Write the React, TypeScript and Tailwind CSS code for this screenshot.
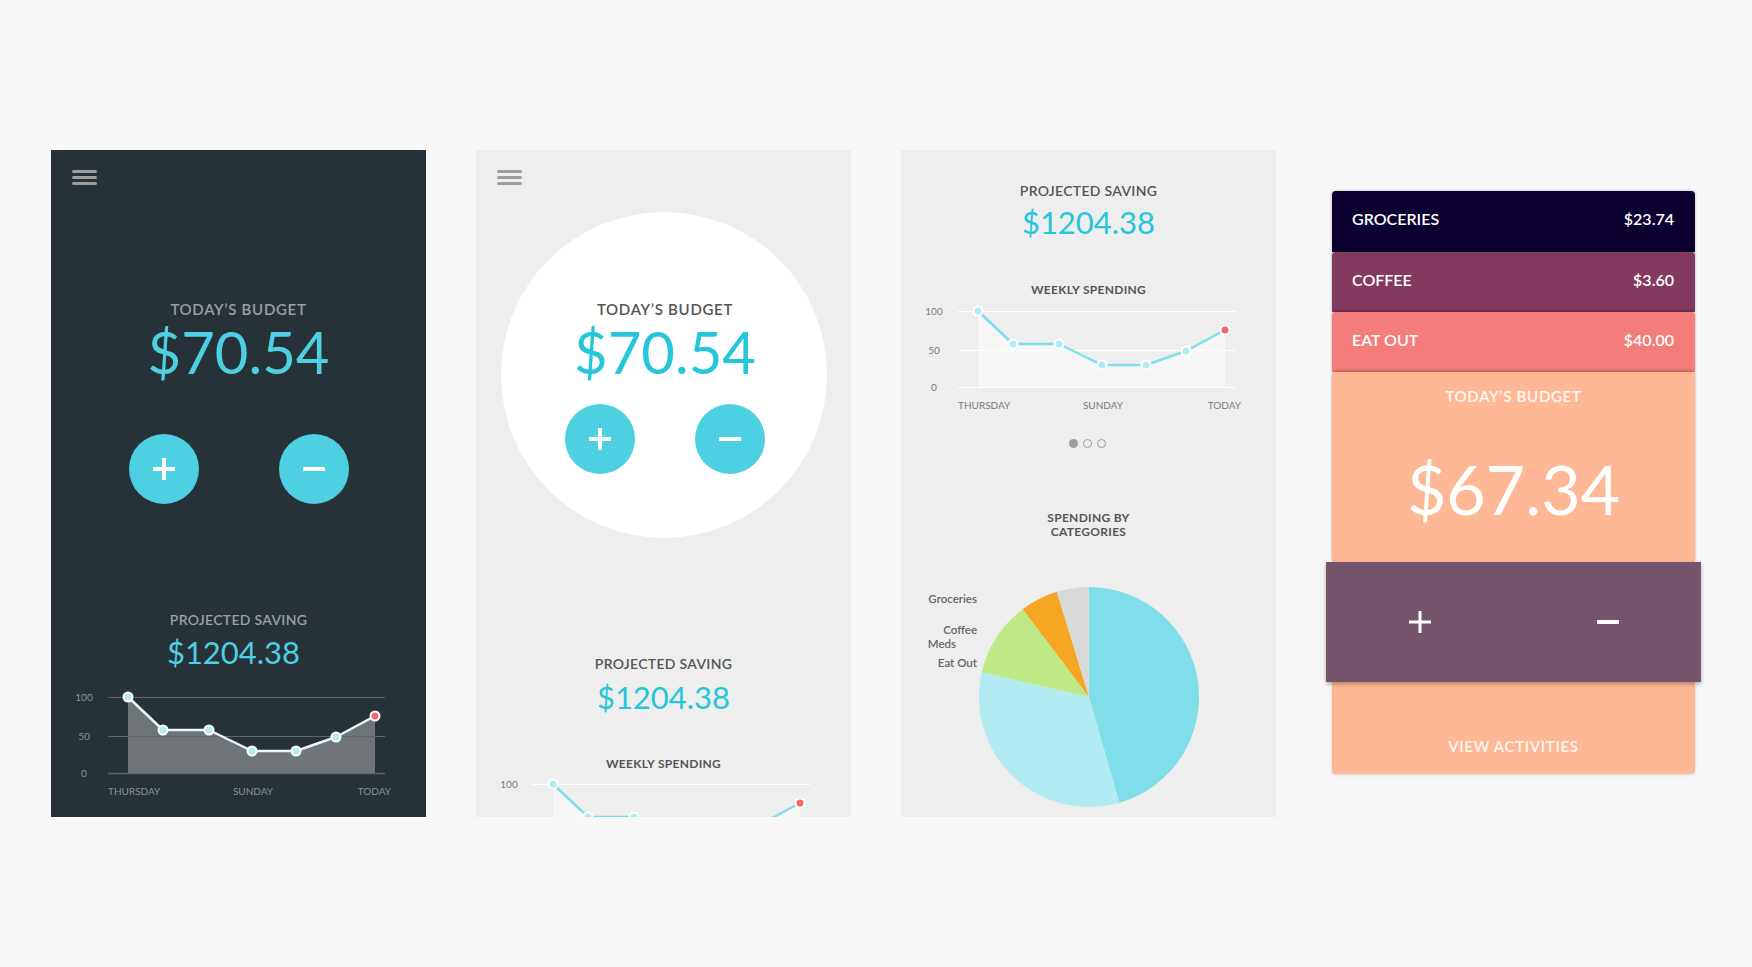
const xs = [77, 112, 158, 201, 245, 285, 324];
const ys = [0, 33, 33, 54, 54, 40, 19];

function Hamburger() {
  return (
    <div className="ml-[21px] mt-[20px] flex h-[15px] w-[25px] flex-col justify-between">
      <div className="h-[3px] rounded-full bg-[#9e9e9e]" />
      <div className="h-[3px] rounded-full bg-[#9e9e9e]" />
      <div className="h-[3px] rounded-full bg-[#9e9e9e]" />
    </div>
  );
}

function RoundButton({ minus }: { minus?: boolean }) {
  return (
    <div className="flex h-[70px] w-[70px] items-center justify-center rounded-full bg-[#4dd0e1]">
      <svg width="24" height="24" viewBox="0 0 24 24">
        <rect x="1" y="10" width="22" height="4" fill="#fff" />
        {!minus && <rect x="10" y="1" width="4" height="22" fill="#fff" />}
      </svg>
    </div>
  );
}

function WeeklyChart({ dark, height, top }: { dark: boolean; height: number; top: number }) {
  const grid = dark ? "#5d6569" : "#ffffff";
  const fill = dark ? "#6e7477" : "#f7f7f7";
  const stroke = dark ? "#eaf6f8" : "#80deea";
  const label = dark ? "#8d9498" : "#7a7a7a";
  const pts = xs.map((x, i) => `${x},${top + ys[i]}`).join(" ");
  const area = `${xs[0]},${top + 76} ${pts} ${xs[6]},${top + 76}`;
  const full = height > top + 100;
  return (
    <svg width={375} height={height} className="block shrink-0" style={{ fontFamily: "Lato, sans-serif" }}>
      <polygon points={area} fill={fill} />
      {[0, 39, 76].map((d) => (
        <line key={d} x1={57} x2={334} y1={top + d + 0.5} y2={top + d + 0.5} stroke={grid} strokeWidth={d === 76 && dark ? 1.5 : 1} />
      ))}
      <text x={33} y={top + 4} fontSize={10} fill={label} textAnchor="middle">100</text>
      {full && (
        <>
          <text x={33} y={top + 43} fontSize={10} fill={label} textAnchor="middle">50</text>
          <text x={33} y={top + 80} fontSize={10} fill={label} textAnchor="middle">0</text>
          <text x={57} y={top + 98} fontSize={10} fill={label}>THURSDAY</text>
          <text x={202} y={top + 98} fontSize={10} fill={label} textAnchor="middle">SUNDAY</text>
          <text x={340} y={top + 98} fontSize={10} fill={label} textAnchor="end">TODAY</text>
        </>
      )}
      <polyline points={pts} fill="none" stroke={stroke} strokeWidth={2.5} strokeLinejoin="round" />
      {xs.map((x, i) => (
        <circle key={x} cx={x} cy={top + ys[i]} r={4.5} fill={i === 6 ? "#f26b6b" : "#b2ebf2"} stroke="#ffffff" strokeWidth={2} />
      ))}
    </svg>
  );
}

function slice(a0: number, a1: number) {
  const r = 110;
  const cx = 188;
  const cy = 115;
  const p = (a: number) => `${cx + r * Math.sin((a * Math.PI) / 180)},${cy - r * Math.cos((a * Math.PI) / 180)}`;
  const large = a1 - a0 > 180 ? 1 : 0;
  return `M${cx},${cy} L${p(a0)} A${r},${r} 0 ${large} 1 ${p(a1)} Z`;
}

const slices: [number, number, string][] = [
  [0, 164, "#80deea"],
  [164, 283, "#b2ebf2"],
  [283, 323, "#bde986"],
  [323, 343, "#f5a623"],
  [343, 360, "#d9d9d9"],
];

function PieChart() {
  return (
    <svg width={375} height={230} className="block shrink-0" style={{ fontFamily: "Lato, sans-serif" }}>
      {slices.map(([a0, a1, c]) => (
        <path key={a0} d={slice(a0, a1)} fill={c} />
      ))}
      <g fontSize={11.5} fill="#666" fontWeight={600} textAnchor="end">
        <text x={76} y={21}>Groceries</text>
        <text x={76} y={52}>Coffee</text>
        <text x={55} y={66}>Meds</text>
        <text x={76} y={85}>Eat Out</text>
      </g>
    </svg>
  );
}

function DarkScreen() {
  return (
    <div className="flex h-[667px] w-[375px] shrink-0 flex-col overflow-hidden bg-[#263238]">
      <Hamburger />
      <div className="mt-[114px] text-center text-[15px] font-semibold leading-[20px] tracking-[0.7px] text-[#9b9fa1]">TODAY’S BUDGET</div>
      <div className="mt-[3px] text-center text-[58px] font-normal leading-[60px] text-[#4dd0e1]">$70.54</div>
      <div className="mt-[52px] flex justify-center gap-[80px]">
        <RoundButton />
        <RoundButton minus />
      </div>
      <div className="mt-[106px] text-center text-[14px] font-semibold leading-[20px] tracking-[0.3px] text-[#9b9fa1]">PROJECTED SAVING</div>
      <div className="mt-[4px] pr-[10px] text-center text-[31px] font-normal leading-[36px] text-[#4dd0e1]">$1204.38</div>
      <WeeklyChart dark height={147} top={27} />
    </div>
  );
}

function CircleScreen() {
  return (
    <div className="flex h-[667px] w-[375px] shrink-0 flex-col overflow-hidden bg-[#eeeeee]">
      <Hamburger />
      <div className="mx-auto mt-[27px] flex h-[326px] w-[326px] flex-col items-center rounded-full bg-white pl-[3px]">
        <div className="pt-[87px] text-[15px] font-semibold leading-[20px] tracking-[0.7px] text-[#555]">TODAY’S BUDGET</div>
        <div className="mt-[3px] text-[58px] font-normal leading-[60px] text-[#26c6da]">$70.54</div>
        <div className="mt-[22px] flex gap-[60px]">
          <RoundButton />
          <RoundButton minus />
        </div>
      </div>
      <div className="mt-[116px] text-center text-[14px] font-semibold leading-[20px] tracking-[0.3px] text-[#555]">PROJECTED SAVING</div>
      <div className="mt-[5px] text-center text-[31px] font-normal leading-[36px] text-[#26c6da]">$1204.38</div>
      <div className="mt-[41px] text-center text-[12px] font-bold leading-[16px] tracking-[0.3px] text-[#555]">WEEKLY SPENDING</div>
      <WeeklyChart dark={false} height={45} top={12} />
    </div>
  );
}

function StatsScreen() {
  return (
    <div className="flex h-[667px] w-[375px] shrink-0 flex-col overflow-hidden bg-[#eeeeee]">
      <div className="pt-[31px] text-center text-[14px] font-semibold leading-[20px] tracking-[0.3px] text-[#555]">PROJECTED SAVING</div>
      <div className="mt-[3px] text-center text-[31px] font-normal leading-[36px] text-[#26c6da]">$1204.38</div>
      <div className="mt-[42px] text-center text-[12px] font-bold leading-[16px] tracking-[0.3px] text-[#555]">WEEKLY SPENDING</div>
      <WeeklyChart dark={false} height={115} top={13} />
      <div className="mt-[26px] flex justify-center gap-[5px] pr-[2px]">
        <div className="h-[9px] w-[9px] rounded-full bg-[#9e9e9e]" />
        <div className="h-[9px] w-[9px] rounded-full border-[1.5px] border-[#9e9e9e]" />
        <div className="h-[9px] w-[9px] rounded-full border-[1.5px] border-[#9e9e9e]" />
      </div>
      <div className="mt-[63px] text-center text-[12px] font-bold leading-[14px] tracking-[0.3px] text-[#555]">
        SPENDING BY
        <br />
        CATEGORIES
      </div>
      <div className="mt-[43px]">
        <PieChart />
      </div>
    </div>
  );
}

function CategoryCard({ name, amount, color }: { name: string; amount: string; color: string }) {
  return (
    <div className={`mx-[6px] flex h-[60px] items-center justify-between rounded-t-[4px] pb-[5px] pl-[20px] pr-[21px] text-[16px] font-semibold text-white shadow-[0_-1px_3px_rgba(0,0,0,0.3)] ${color}`}>
      <span>{name}</span>
      <span>{amount}</span>
    </div>
  );
}

function CardsScreen() {
  return (
    <div className="mt-[41px] flex w-[375px] shrink-0 flex-col">
      <div className="mx-[6px] flex h-[61px] items-center justify-between rounded-t-[4px] bg-[#0b002f] pb-[5px] pl-[20px] pr-[21px] text-[16px] font-semibold text-white shadow-[0_0_3px_rgba(0,0,0,0.25)]">
        <span>GROCERIES</span>
        <span>$23.74</span>
      </div>
      <CategoryCard name="COFFEE" amount="$3.60" color="bg-[#833a5e]" />
      <CategoryCard name="EAT OUT" amount="$40.00" color="bg-[#f47c7b]" />
      <div className="mx-[6px] flex h-[190px] flex-col items-center rounded-t-[4px] bg-[#ffb896] shadow-[0_-1px_3px_rgba(0,0,0,0.3)]">
        <div className="mt-[14px] text-[15px] font-semibold leading-[20px] tracking-[0.7px] text-[#fff8f3]">TODAY’S BUDGET</div>
        <div className="mt-[48px] text-[68px] font-normal leading-[70px] text-white">$67.34</div>
      </div>
      <div className="relative z-10 flex h-[120px] items-center bg-[#76546c] shadow-[0_2px_4px_rgba(0,0,0,0.3)]">
        <div className="flex w-[187px] justify-center">
          <svg width="24" height="24" viewBox="0 0 24 24">
            <rect x="1" y="10.5" width="22" height="3" fill="#fff" />
            <rect x="10.5" y="1" width="3" height="22" fill="#fff" />
          </svg>
        </div>
        <div className="flex w-[188px] justify-center pl-[2px]">
          <svg width="24" height="24" viewBox="0 0 24 24">
            <rect x="1" y="10" width="22" height="4" fill="#fff" />
          </svg>
        </div>
      </div>
      <div className="mx-[6px] flex h-[92px] items-start justify-center rounded-b-[4px] bg-[#ffb896] shadow-[0_1px_3px_rgba(0,0,0,0.15)]">
        <div className="mt-[54px] text-[15px] font-semibold leading-[20px] tracking-[0.7px] text-[#fff8f3]">VIEW ACTIVITIES</div>
      </div>
    </div>
  );
}

export default function App() {
  return (
    <div className="flex h-[967px] w-[1752px] items-start gap-[50px] bg-[#f8f8f8] pl-[51px] pt-[150px] font-['Lato',sans-serif]">
      <DarkScreen />
      <CircleScreen />
      <StatsScreen />
      <CardsScreen />
    </div>
  );
}
